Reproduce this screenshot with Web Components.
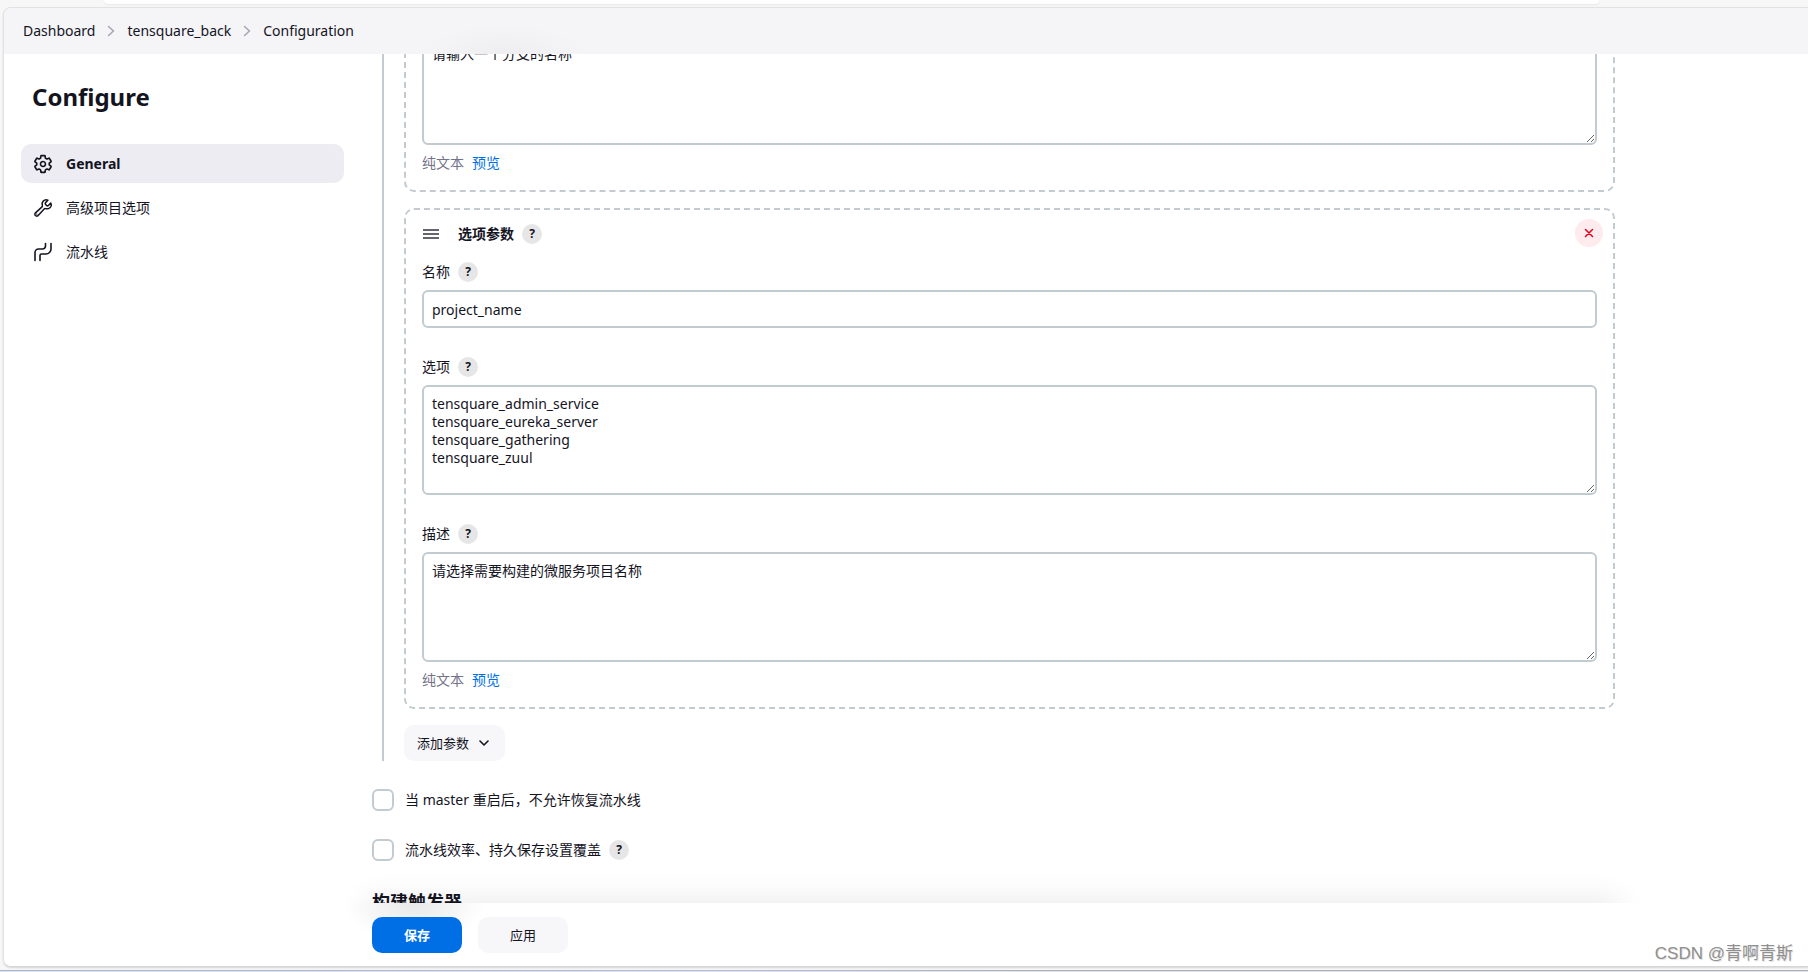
<!DOCTYPE html>
<html lang="zh-CN">
<head>
<meta charset="utf-8">
<title>tensquare_back Config</title>
<style>
  html, body { height: 100%; }
  body {
    margin: 0;
    background: #f7f7f7;
    color: #14141f;
    font: 14px/20px "Noto Sans", "Noto Sans CJK SC", sans-serif;
    --line: #c1cbd0;
    --accent: #006fe6;
    --quiet: #f7f7fa;
    --radius: 10px;
  }
</style>
</head>
<body>
<app-window>
  <crumb-bar slot="top"></crumb-bar>
  <config-nav slot="side" heading="Configure">
    <nav-item icon="gear" active>General</nav-item>
    <nav-item icon="wrench">高级项目选项</nav-item>
    <nav-item icon="pipe">流水线</nav-item>
  </config-nav>
  <param-list>
    <param-card continued>
      <text-field lines preview value="请输入一个分支的名称"></text-field>
    </param-card>
    <param-card heading="选项参数">
      <text-field label="名称" value="project_name"></text-field>
      <text-field label="选项" lines value="tensquare_admin_service&#10;tensquare_eureka_server&#10;tensquare_gathering&#10;tensquare_zuul"></text-field>
      <text-field label="描述" lines preview value="请选择需要构建的微服务项目名称"></text-field>
    </param-card>
    <add-button>添加参数</add-button>
  </param-list>
  <check-row>当 master 重启后，不允许恢复流水线</check-row>
  <check-row help>流水线效率、持久保存设置覆盖</check-row>
  <section-title>构建触发器</section-title>
  <action-bar slot="bottom"></action-bar>
</app-window>

<script>
const ICONS = {
  gear: `<svg viewBox="0 0 512 512" fill="none" stroke="currentColor" stroke-width="42" stroke-linecap="round" stroke-linejoin="round"><path d="M262.29 192.31a64 64 0 1057.4 57.4 64.13 64.13 0 00-57.4-57.4zM416.39 256a154.34 154.34 0 01-1.53 20.79l45.21 35.46a10.81 10.81 0 012.45 13.75l-42.77 74a10.81 10.81 0 01-13.14 4.59l-44.9-18.08a16.11 16.11 0 00-15.17 1.75A164.48 164.48 0 01325 400.8a15.94 15.94 0 00-8.82 12.14l-6.73 47.89a11.08 11.08 0 01-10.68 9.17h-85.54a11.11 11.11 0 01-10.69-8.87l-6.72-47.82a16.07 16.07 0 00-9-12.22 155.3 155.3 0 01-21.46-12.57 16 16 0 00-15.11-1.71l-44.89 18.07a10.81 10.81 0 01-13.14-4.58l-42.77-74a10.8 10.8 0 012.45-13.75l38.21-30a16.05 16.05 0 006-14.08c-.36-4.17-.58-8.33-.58-12.5s.21-8.27.58-12.35a16 16 0 00-6.07-13.94l-38.19-30A10.81 10.81 0 0149.48 186l42.77-74a10.81 10.81 0 0113.14-4.59l44.9 18.08a16.11 16.11 0 0015.17-1.75A164.48 164.48 0 01187 111.2a15.94 15.94 0 008.82-12.14l6.73-47.89A11.08 11.08 0 01213.23 42h85.54a11.11 11.11 0 0110.69 8.87l6.72 47.82a16.07 16.07 0 009 12.22 155.3 155.3 0 0121.46 12.57 16 16 0 0015.11 1.71l44.89-18.07a10.81 10.81 0 0113.14 4.58l42.77 74a10.8 10.8 0 01-2.45 13.75l-38.21 30a16.05 16.05 0 00-6.05 14.08c.33 4.14.55 8.3.55 12.47z"/></svg>`,
  wrench: `<svg viewBox="0 0 512 512" fill="none" stroke="currentColor" stroke-width="38" stroke-linecap="round"><path d="M393.87 190a32.1 32.1 0 01-45.25 0l-26.57-26.57a32.09 32.09 0 010-45.26L382.19 58a1 1 0 00-.3-1.64c-38.82-16.64-89.15-8.16-121.11 23.57-30.58 30.35-32.32 76-21.12 115.84a31.93 31.93 0 01-9.06 32.08L64 380a48.17 48.17 0 1068 68l153.86-167a31.93 31.93 0 0131.6-9.13c39.54 10.59 84.54 8.6 114.72-21.19 32.49-32 39.5-88.56 23.75-120.93a1 1 0 00-1.6-.26z"/><circle cx="96" cy="416" r="4" stroke-width="26"/></svg>`,
  pipe: `<svg viewBox="0 0 20 20" fill="none" stroke="currentColor" stroke-width="1.600" stroke-linecap="round"><path d="M2 18.500V10.500a3.500 3.500 0 0 1 3.500-3.500H9.500a3 3 0 0 0 3-3V1.500M7 18.500v-5a1.500 1.500 0 0 1 1.500-1.500H13a5 5 0 0 0 5-5V1.500"/></svg>`,
  chevron: `<svg viewBox="0 0 8 12" width="8" height="12" fill="none" stroke="#a6a6b5" stroke-width="1.600" stroke-linecap="round" stroke-linejoin="round" aria-hidden="true"><path d="M1.500 1.500L6.500 6l-5 4.500"/></svg>`
};

/* Base class: clones a template made of the class's styles and markup. */
class Base extends HTMLElement {
  connectedCallback() {
    if (this.shadowRoot) return;
    const t = document.createElement('template');
    t.innerHTML = `<style>*{box-sizing:border-box}:host{display:block}button,input,textarea{font:inherit;color:inherit;margin:0}svg{display:block;flex:none}</style>` + this.render();
    this.attachShadow({ mode: 'open' }).append(t.content.cloneNode(true));
    this.ready();
  }
  ready() {}
}

customElements.define('app-window', class extends Base {
  render() {
    return `<style>
      :host { position: relative; display: flex; flex-direction: column; height: 100vh; overflow: hidden; }
      .tab { height: 4px; flex: none; margin: 0 209px 3px 104px; background: #fff; border-radius: 0 0 10px 10px; box-shadow: 0 1px 2px #0001; }
      .frame { position: relative; flex: 1; min-height: 0; margin: 0 0 3px 3px; border: 1px solid #e2e2e2; border-right: 0; border-bottom-color: #d6d6d6; border-radius: 8px 0 0 8px; background: #fff; overflow: hidden; display: grid; grid-template-columns: 340px minmax(0, 1fr); column-gap: 28px; box-shadow: 0 1px 2px #0002; }
      main { padding-right: 193px; min-width: 0; }
      .edge { flex: none; height: 2px; background: linear-gradient(90deg, #a8b6ca, #b4bbd6 40%, #b0b0b0 60%); border-bottom: 1px solid #dde2ee; }
      .mark { position: absolute; z-index: 3; right: 15px; bottom: 6px; font: 17px/24px "Liberation Sans", "Noto Sans CJK SC", sans-serif; color: #8f8f8f; text-shadow: 1px 1px 1px #ddd; }
    </style>
    <div class="tab"></div>
    <div class="frame">
      <slot name="top"></slot>
      <slot name="side"></slot>
      <main><slot></slot></main>
      <slot name="bottom"></slot>
    </div>
    <div class="edge"></div>
    <div class="mark">CSDN @青啊青斯</div>`;
  }
});

customElements.define('crumb-bar', class extends Base {
  render() {
    return `<style>
      :host { position: absolute; inset: 0 0 auto 0; z-index: 2; background: radial-gradient(80px 30px at 500px 100%, #eeeef1, #eeeef100), #f5f5f8; }
      nav { display: flex; align-items: center; gap: 12px; height: 46px; padding: 0 19px; }
      a { color: inherit; text-decoration: none; }
    </style>
    <nav aria-label="breadcrumb"><a href="#dashboard">Dashboard</a>${ICONS.chevron}<a href="#job">tensquare_back</a>${ICONS.chevron}<a href="#configure">Configuration</a></nav>`;
  }
});

customElements.define('config-nav', class extends Base {
  render() {
    return `<style>
      :host { padding: 72px 0 0 17px; }
      h1 { margin: 0 0 30px 11px; font-size: 24px; line-height: 34px; font-weight: 700; }
      nav { display: grid; gap: 5px; }
    </style>
    <h1>${this.getAttribute('heading')}</h1><nav><slot></slot></nav>`;
  }
});

customElements.define('nav-item', class extends Base {
  render() {
    return `<style>
      a { display: flex; align-items: center; gap: 13px; height: 39px; padding: 0 12px; border-radius: var(--radius); color: inherit; text-decoration: none; }
      svg { width: 20px; height: 20px; }
      :host([active]) a { background: #ececf2; font-weight: 700; }
    </style>
    <a href="#section">${ICONS[this.getAttribute('icon')]}<slot></slot></a>`;
  }
});

customElements.define('help-button', class extends Base {
  render() {
    return `<style>
      button { display: grid; place-items: center; width: 20px; height: 20px; padding: 0; border: 0; border-radius: 50%; background: #e6e6e6; font-size: 12px; font-weight: 700; line-height: 20px; }
    </style>
    <button type="button" aria-label="Help">?</button>`;
  }
});

customElements.define('param-list', class extends Base {
  render() {
    return `<style>
      :host { display: grid; gap: 16px; margin-left: 10px; padding-left: 20px; border-left: 2px solid var(--line); margin-bottom: 28px; }
    </style><slot></slot>`;
  }
});

customElements.define('param-card', class extends Base {
  render() {
    const title = this.getAttribute('heading');
    return `<style>
      section { position: relative; display: grid; gap: 29px; padding: 14px 16px 17px; border: 2px dashed var(--line); border-radius: var(--radius); }
      :host([continued]) section { border-top: 0; padding-top: 27px; border-radius: 0 0 var(--radius) var(--radius); }
      header { display: flex; align-items: center; height: 20px; margin-bottom: -11px; gap: 8px; font-weight: 700; }
      .grip { margin: 0 11px 0 1px; }
      .close { position: absolute; top: 9px; right: 10px; display: grid; place-items: center; width: 28px; height: 28px; padding: 0; border: 0; border-radius: 50%; background: #fdebed; color: #e6001f; }
    </style>
    <section>${title ? `<header>
      <svg class="grip" width="16" height="10" viewBox="0 0 16 10" stroke="#333340" stroke-width="1.500" aria-hidden="true"><path d="M0 1h16M0 5h16M0 9h16"/></svg>
      <span>${title}</span><help-button></help-button>
      <button class="close" type="button" aria-label="Delete"><svg width="10" height="10" viewBox="0 0 10 10" stroke="currentColor" stroke-width="1.500" stroke-linecap="round"><path d="M1.500 1.500l7 7M8.500 1.500l-7 7"/></svg></button>
    </header>` : ''}<slot></slot></section>`;
  }
});

customElements.define('text-field', class extends Base {
  render() {
    const label = this.getAttribute('label');
    const control = this.hasAttribute('lines') ? '<textarea id="control"></textarea>' : '<input id="control" type="text">';
    return `<style>
      :host { display: grid; gap: 8px; min-width: 0; }
      .label { display: flex; align-items: center; gap: 8px; height: 20px; }
      input, textarea { display: block; width: 100%; padding: 8px; border: 2px solid var(--line); border-radius: 6px; background: #fff; line-height: 18px; outline: 0; }
      input { height: 38px; }
      textarea { height: 110px; resize: vertical; }
      .foot { display: flex; gap: 8px; color: #73738c; }
      a { color: var(--accent); text-decoration: none; }
    </style>
    ${label ? `<div class="label"><label for="control">${label}</label><help-button></help-button></div>` : ''}
    ${control}
    ${this.hasAttribute('preview') ? '<div class="foot"><span>纯文本</span><a href="#preview">预览</a></div>' : ''}`;
  }
  ready() {
    const c = this.shadowRoot.getElementById('control');
    c.value = this.getAttribute('value');
    if (!this.hasAttribute('label')) c.setAttribute('aria-label', '描述');
  }
});

customElements.define('add-button', class extends Base {
  render() {
    return `<style>
      button { display: flex; align-items: center; gap: 10px; height: 36px; padding: 0 16px 0 13px; border: 0; border-radius: var(--radius); background: var(--quiet); font-size: 13px; }
    </style>
    <button type="button"><slot></slot><svg width="10" height="7" viewBox="0 0 10 7" fill="none" stroke="currentColor" stroke-width="1.600" stroke-linecap="round" stroke-linejoin="round"><path d="M1 1l4 4 4-4"/></svg></button>`;
  }
});

customElements.define('check-row', class extends Base {
  render() {
    return `<style>
      :host { display: flex; align-items: center; gap: 8px; height: 22px; margin-bottom: 28px; }
      label { display: flex; align-items: center; gap: 11px; }
      input { appearance: none; width: 22px; height: 22px; border: 2px solid var(--line); border-radius: 6px; background: #fff; }
    </style>
    <label><input type="checkbox"><span><slot></slot></span></label>${this.hasAttribute('help') ? '<help-button></help-button>' : ''}`;
  }
});

customElements.define('section-title', class extends Base {
  render() {
    return `<style>h2 { margin: 0; font-size: 18px; line-height: 26px; font-weight: 700; }</style><h2><slot></slot></h2>`;
  }
});

customElements.define('action-bar', class extends Base {
  render() {
    return `<style>
      :host { position: absolute; inset: auto 0 0 0; z-index: 2; height: 63px; padding: 0 193px 0 368px; background: radial-gradient(70px 40px at 410px 0, #e8e8e8, #e8e8e800), #fff; }
      .bar { position: relative; display: flex; align-items: center; gap: 16px; height: 63px; }
      .bar::before { content: ""; position: absolute; inset: 0; box-shadow: 0 0 30px 5px rgba(0, 0, 0, .08); clip-path: inset(-40px -40px 100% -40px); pointer-events: none; }
      button { width: 90px; height: 36px; padding: 0; border: 0; border-radius: var(--radius); background: var(--quiet); font-size: 13px; }
      .primary { background: var(--accent); color: #fff; font-weight: 700; }
    </style>
    <div class="bar"><button class="primary" type="submit">保存</button><button type="button">应用</button></div>`;
  }
});
</script>
</body>
</html>
